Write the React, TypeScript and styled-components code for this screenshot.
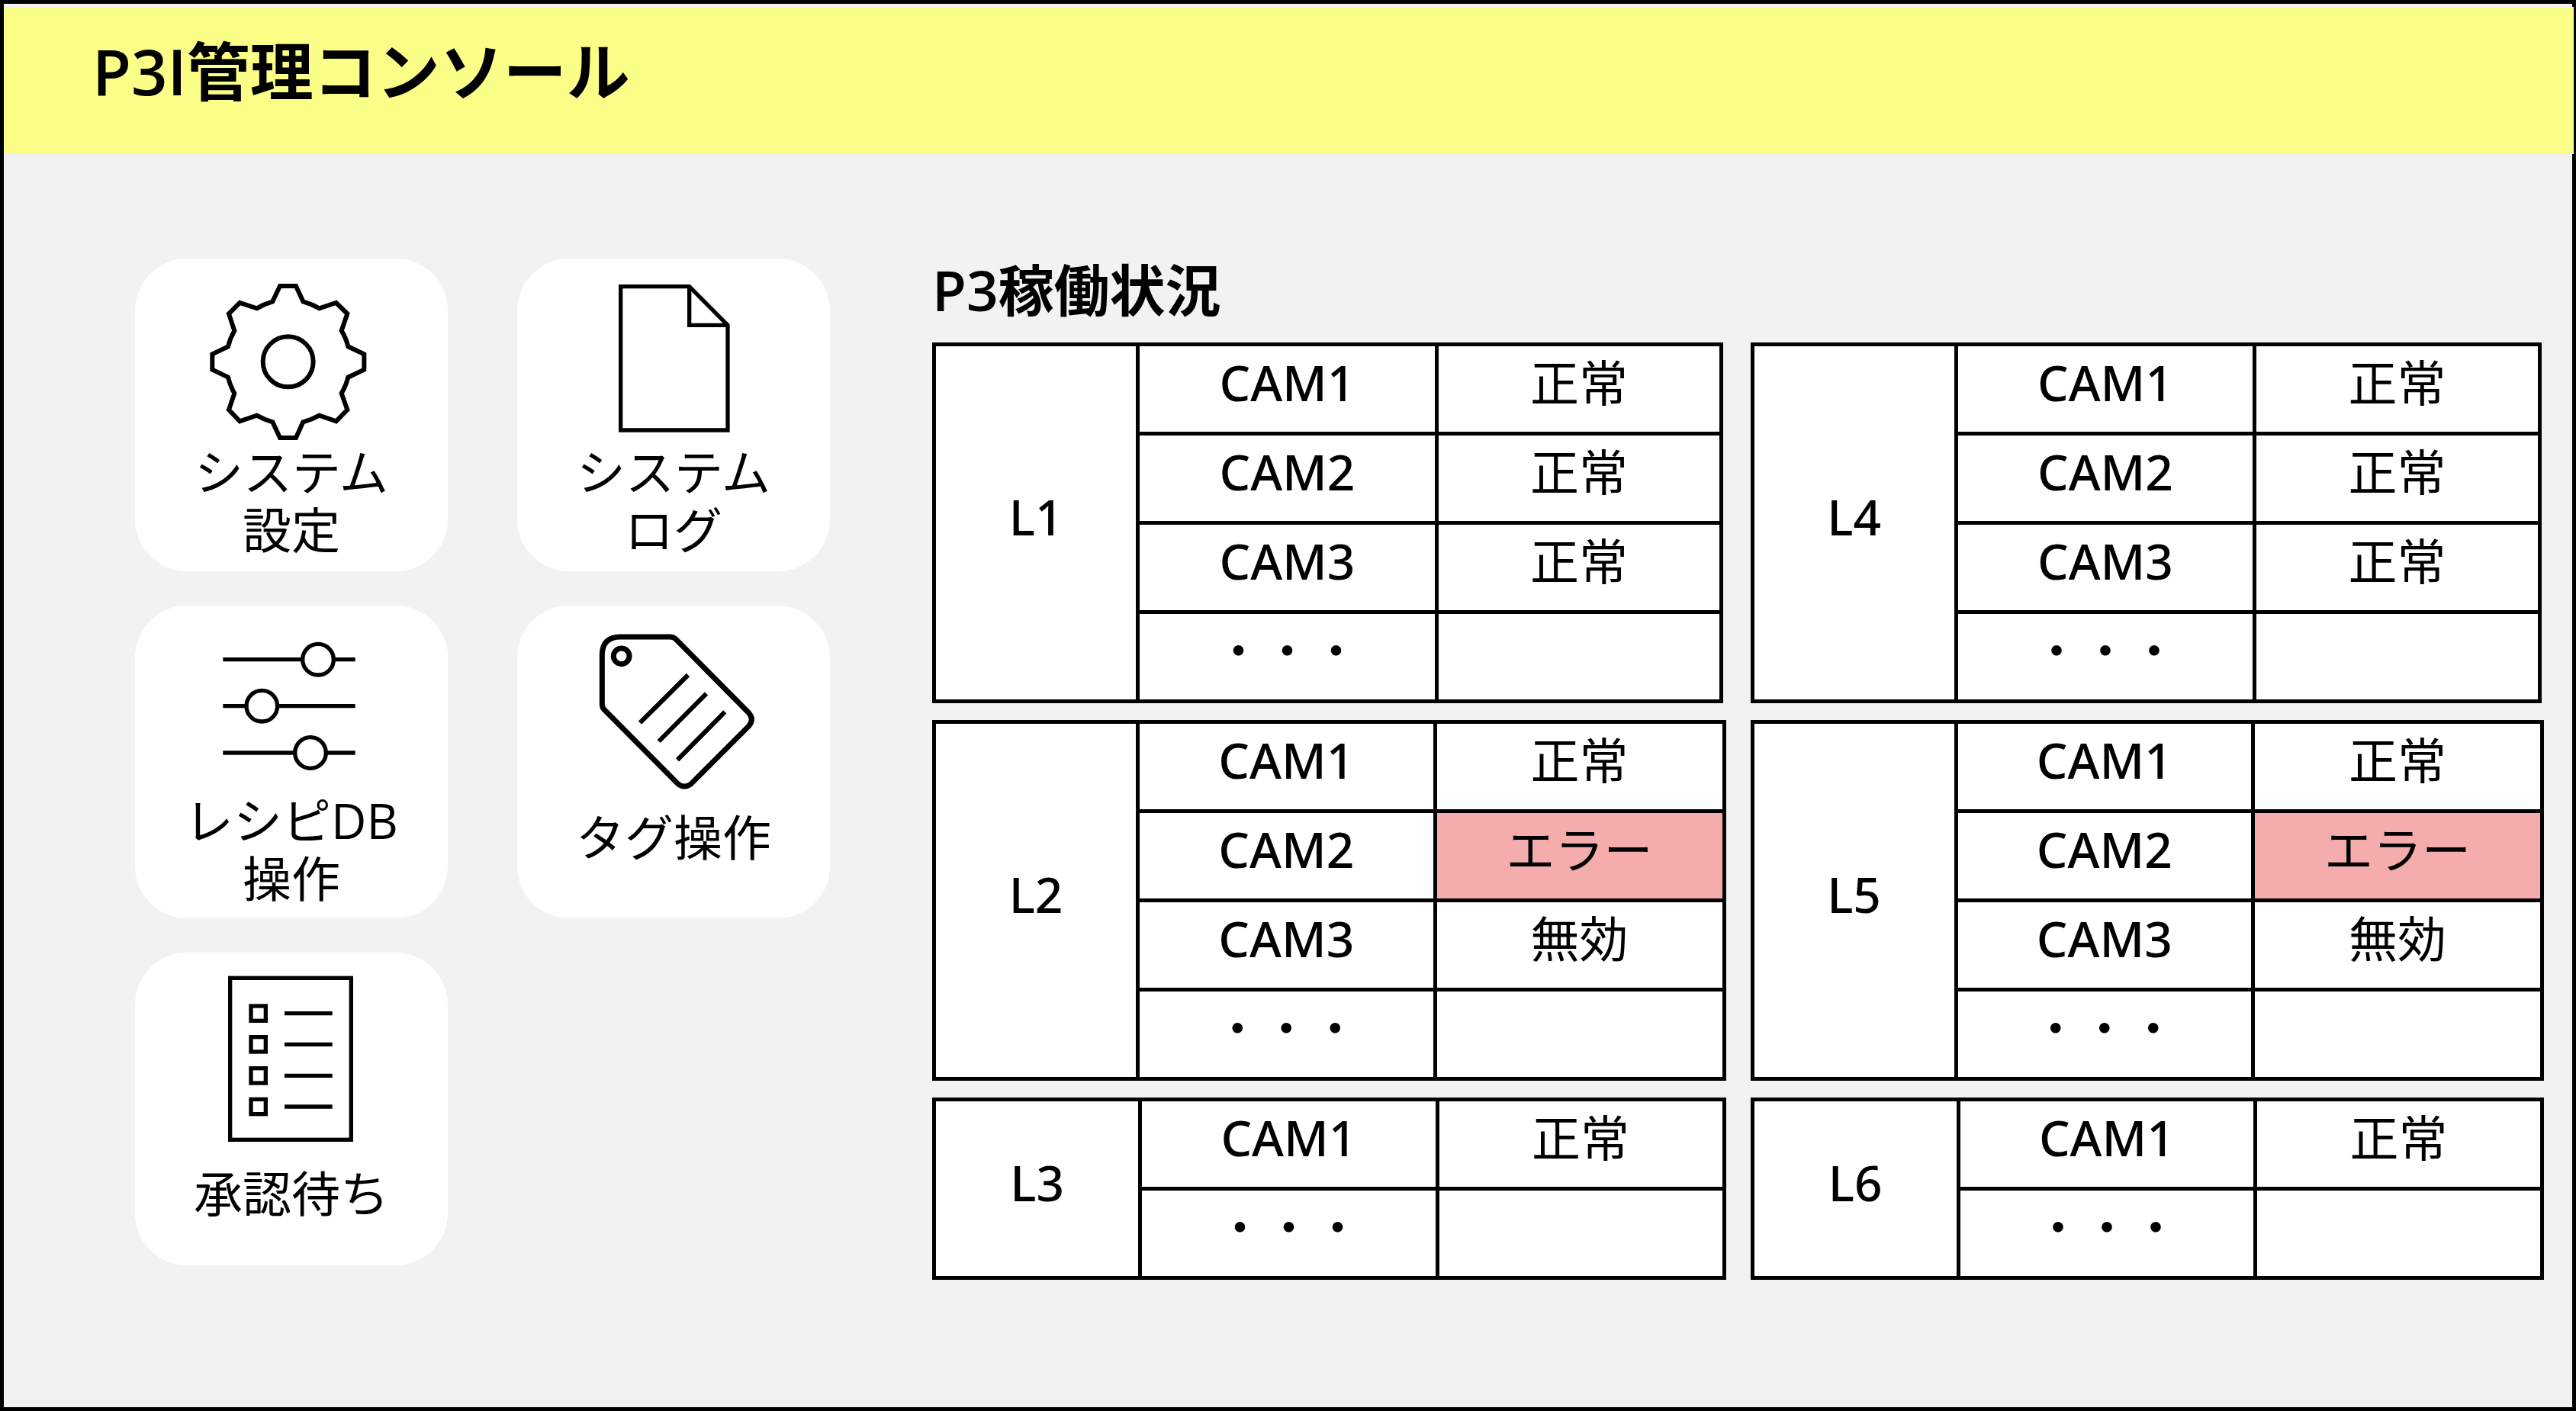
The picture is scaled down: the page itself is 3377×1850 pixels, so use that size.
import React from 'react';
import styled, { createGlobalStyle } from 'styled-components';

const GlobalStyle = createGlobalStyle`
  *, *::before, *::after { box-sizing: border-box; }
  body {
    margin: 0;
    background: #f2f2f2;
    color: #000;
    font-family: 'Open Sans', 'Noto Sans CJK JP', sans-serif;
    font-size: 64px;
    line-height: 76px;
  }
`;

const Frame = styled.div`
  display: flex;
  flex-direction: column;
  min-height: 100vh;
  padding-top: 4px;
  border: 5px solid #000;
  background: #f2f2f2;
`;

const Header = styled.header`
  display: flex;
  align-items: flex-start;
  height: 193px;
  margin-right: -2px;
  padding: 28px 116px;
  background: #fbff87;
`;

const Title = styled.h1`
  margin: 0;
  font-size: 83px;
  font-weight: 700;
  line-height: 112px;
`;

const Latin = styled.span`
  font-weight: 600;
`;

const Main = styled.main`
  display: flex;
  align-items: flex-start;
  gap: 134px;
  padding: 137px 37px 137px 172px;
`;

const Menu = styled.nav`
  display: grid;
  grid-template-columns: repeat(2, 410px);
  grid-auto-rows: 410px;
  gap: 45px 91px;
`;

const MenuCard = styled.button`
  display: flex;
  flex-direction: column;
  align-items: center;
  padding: 20px 0 0;
  border: 0;
  border-radius: 68px;
  background: #fff;
  color: inherit;
  font: inherit;
  cursor: pointer;
`;

const Icon = styled.svg`
  flex: none;
  width: 240px;
  fill: none;
  stroke: #000;
  stroke-width: 16;
`;

const CardLabel = styled.span`
  white-space: pre-line;
`;

const Status = styled.section`
  flex: 1;
  min-width: 0;
`;

const StatusTitle = styled.h2`
  margin: 0 0 28px;
  font-size: 73px;
  font-weight: 700;
  line-height: 82px;
`;

const LineGrid = styled.div`
  display: grid;
  grid-template-columns: repeat(2, minmax(0, 1fr));
  gap: 22px 32px;
  align-items: start;
`;

const LineTable = styled.table<{ $width: string }>`
  width: ${(p) => p.$width};
  table-layout: fixed;
  border-collapse: collapse;
  background: #fff;
  font-family: 'Noto Sans', 'Noto Sans CJK JP', sans-serif;
  text-align: center;
`;

const Col = styled.col<{ $width: string }>`
  width: ${(p) => p.$width};
`;

const Row = styled.tr`
  height: 117px;
`;

const LineName = styled.th`
  padding: 0 0 16px;
  border: 5px solid #000;
  font-weight: 500;
`;

const Cell = styled.td<{ $error?: boolean }>`
  padding: 0 0 16px;
  border: 5px solid #000;
  background: ${(p) => (p.$error ? '#f5acad' : '#fff')};
`;

const CameraName = styled.span`
  font-weight: 500;
`;

const GearIcon = () => (
  <Icon viewBox="306 117 720 666" height="222" aria-hidden="true">
    <g strokeWidth="18">
      <path d="M621 165H684L712 226Q746 236 776 253L842 231L886 274L863 341Q881 370 889 403L952 433V494L889 524Q881 557 863 587L886 652L842 697L776 674Q746 691 712 700L684 762H621L592 700Q559 691 530 674L463 697L420 652L442 587Q425 557 417 524L355 494V433L417 403Q425 370 442 341L420 274L463 231L530 253Q559 236 592 226Z" />
      <circle cx="653" cy="463" r="99" />
    </g>
  </Icon>
);

const DocumentIcon = () => (
  <Icon viewBox="309 117 720 666" height="222" aria-hidden="true">
    <path d="M461 167H731L882 319V732H461Z" />
    <path d="M731 167V319H882" />
  </Icon>
);

const SlidersIcon = () => (
  <Icon viewBox="306 102 720 672" height="224" aria-hidden="true">
    <path d="M397 254H917M397 437H917M397 621H917" />
    <g fill="#fff">
      <circle cx="771" cy="254" r="61" />
      <circle cx="550" cy="437" r="61" />
      <circle cx="741" cy="621" r="61" />
    </g>
  </Icon>
);

const TagIcon = () => (
  <Icon viewBox="309 102 720 738" height="246" aria-hidden="true">
    <g strokeWidth="21">
      <path d="M460 165H655Q668 165 678 174L965 464Q987 490 965 516L738 743Q712 763 686 743L396 451Q388 443 388 430V237Q388 165 460 165Z" />
      <circle cx="464" cy="241" r="31" />
    </g>
    <path strokeWidth="18" d="M726 315L537 503M798 388L611 576M871 460L684 649" />
  </Icon>
);

const ChecklistIcon = () => (
  <Icon viewBox="306 117 720 774" height="258" aria-hidden="true">
    <rect x="425" y="157" width="476" height="636" />
    {[296, 418, 541, 663].map((y) => (
      <g key={y}>
        <rect x="507" y={y - 29} width="58" height="58" />
        <path d={`M639 ${y}H827`} />
      </g>
    ))}
  </Icon>
);

const menu = [
  { label: 'システム\n設定', Glyph: GearIcon },
  { label: 'システム\nログ', Glyph: DocumentIcon },
  { label: 'レシピDB\n操作', Glyph: SlidersIcon },
  { label: 'タグ操作', Glyph: TagIcon },
  { label: '承認待ち', Glyph: ChecklistIcon },
];

type Camera = [name: string, state: string];
type Layout = { width: string; cols: string[] };

const layouts: Record<string, Layout> = {
  normal: { width: '99.7%', cols: ['25.9%', '37.9%', '36.2%'] },
  alert: { width: '100%', cols: ['25.8%', '37.6%', '36.6%'] },
  short: { width: '100%', cols: ['26.1%', '37.6%', '36.3%'] },
};

const more: Camera = ['・・・', ''];
const allNormal: Camera[] = [['CAM1', '正常'], ['CAM2', '正常'], ['CAM3', '正常'], more];
const withError: Camera[] = [['CAM1', '正常'], ['CAM2', 'エラー'], ['CAM3', '無効'], more];
const single: Camera[] = [['CAM1', '正常'], more];

const lines = [
  { name: 'L1', layout: layouts.normal, cameras: allNormal },
  { name: 'L4', layout: layouts.normal, cameras: allNormal },
  { name: 'L2', layout: layouts.alert, cameras: withError },
  { name: 'L5', layout: layouts.alert, cameras: withError },
  { name: 'L3', layout: layouts.short, cameras: single },
  { name: 'L6', layout: layouts.short, cameras: single },
];

export default function App() {
  return (
    <>
      <GlobalStyle />
      <Frame lang="ja">
        <Header>
          <Title>
            <Latin>P3I</Latin>管理コンソール
          </Title>
        </Header>
        <Main>
          <Menu>
            {menu.map(({ label, Glyph }) => (
              <MenuCard key={label} type="button">
                <Glyph />
                <CardLabel>{label}</CardLabel>
              </MenuCard>
            ))}
          </Menu>
          <Status>
            <StatusTitle>
              <Latin>P3</Latin>稼働状況
            </StatusTitle>
            <LineGrid>
              {lines.map(({ name, layout, cameras }) => (
                <LineTable key={name} $width={layout.width}>
                  <colgroup>
                    {layout.cols.map((width, i) => (
                      <Col key={i} $width={width} />
                    ))}
                  </colgroup>
                  <tbody>
                    {cameras.map(([camera, state], i) => (
                      <Row key={camera}>
                        {i === 0 && (
                          <LineName scope="rowgroup" rowSpan={cameras.length}>
                            {name}
                          </LineName>
                        )}
                        <Cell>
                          {camera === more[0] ? camera : <CameraName>{camera}</CameraName>}
                        </Cell>
                        <Cell $error={state === 'エラー'}>{state}</Cell>
                      </Row>
                    ))}
                  </tbody>
                </LineTable>
              ))}
            </LineGrid>
          </Status>
        </Main>
      </Frame>
    </>
  );
}
